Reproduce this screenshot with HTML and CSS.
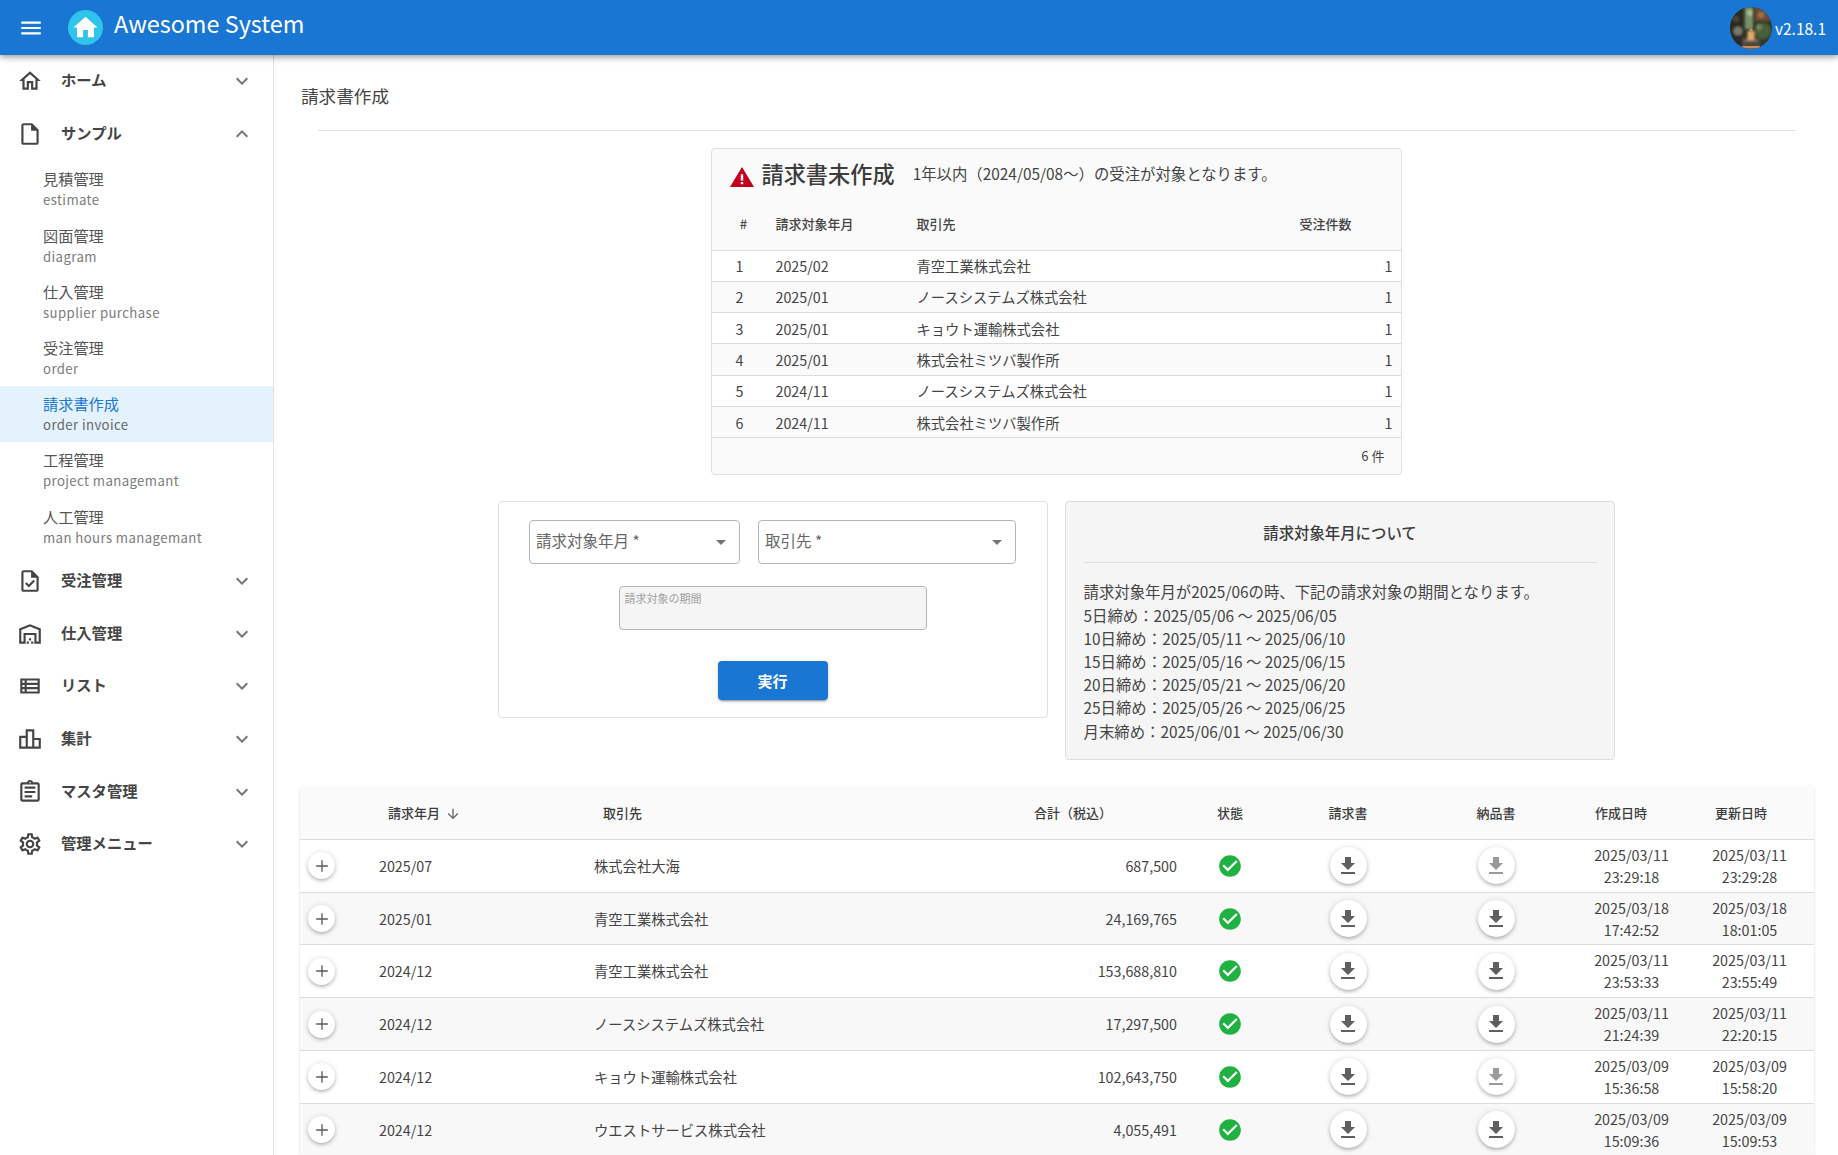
FILE: index.html
```html
<!DOCTYPE html>
<html lang="ja">
<head>
<meta charset="utf-8">
<title>Awesome System</title>
<link rel="stylesheet" href="styles.css">
</head>
<body>

<!-- icon sprite -->
<svg class="sprite" xmlns="http://www.w3.org/2000/svg">
  <symbol id="i-home" viewBox="0 0 24 24"><path d="M12 5.69l5 4.5V18h-2v-6H9v6H7v-7.81l5-4.5M12 3L2 12h3v8h6v-6h2v6h6v-8h3L12 3z"/></symbol>
  <symbol id="i-file" viewBox="0 0 24 24"><path d="M14 2H6c-1.1 0-1.99.9-1.99 2L4 20c0 1.1.89 2 1.99 2H18c1.1 0 2-.9 2-2V8l-6-6zM6 20V4h7v5h5v11H6z"/></symbol>
  <symbol id="i-task" viewBox="0 0 24 24"><path d="M14 2H6c-1.1 0-2 .9-2 2v16c0 1.1.89 2 1.99 2H18c1.1 0 2-.9 2-2V8l-6-6zm4 18H6V4h7v5h5v11zm-9.18-6.95L7.4 14.46 10.94 18l5.66-5.66-1.41-1.41-4.24 4.24-1.42-1.42z"/></symbol>
  <symbol id="i-warehouse" viewBox="0 0 24 24"><path d="M20 8.35V19h-2v-8H6v8H4V8.35l8-3.2 8 3.2zM22 21V7L12 3 2 7v14h6v-8h8v8h6zm-11-2H9v2h2v-2zm2-3h-2v2h2v-2zm2 3h-2v2h2v-2z"/></symbol>
  <symbol id="i-list" viewBox="0 0 24 24"><path d="M3 5v14h18V5H3zm4 2v2H5V7h2zm-2 6v-2h2v2H5zm0 2h2v2H5v-2zm14 2H9v-2h10v2zm0-4H9v-2h10v2zm0-4H9V7h10v2z"/></symbol>
  <symbol id="i-chart" viewBox="0 0 24 24"><path d="M16 11V3H8v6H2v12h20V11h-6zm-6-6h4v14h-4V5zm-6 6h4v8H4v-8zm16 8h-4v-6h4v6z"/></symbol>
  <symbol id="i-assign" viewBox="0 0 24 24"><path d="M7 15h7v2H7zm0-4h10v2H7zm0-4h10v2H7zm12-4h-4.18C14.4 1.84 13.3 1 12 1c-1.3 0-2.4.84-2.82 2H5c-.14 0-.27.01-.4.04-.39.08-.74.28-1.01.55-.18.18-.33.4-.43.64-.1.23-.16.49-.16.77v14c0 .27.06.54.16.78s.25.45.43.64c.27.27.62.47 1.01.55.13.02.26.03.4.03h14c1.1 0 2-.9 2-2V5c0-1.1-.9-2-2-2zm-7-.25c.41 0 .75.34.75.75s-.34.75-.75.75-.75-.34-.75-.75.34-.75.75-.75zM19 19H5V5h14v14z"/></symbol>
  <symbol id="i-gear" viewBox="0 0 24 24"><path d="M19.43 12.98c.04-.32.07-.64.07-.98 0-.34-.03-.66-.07-.98l2.11-1.65c.19-.15.24-.42.12-.64l-2-3.46c-.09-.16-.26-.25-.44-.25-.06 0-.12.01-.17.03l-2.49 1c-.52-.4-1.08-.73-1.69-.98l-.38-2.65C14.46 2.18 14.25 2 14 2h-4c-.25 0-.46.18-.49.42l-.38 2.65c-.61.25-1.17.59-1.69.98l-2.49-1c-.06-.02-.12-.03-.18-.03-.17 0-.34.09-.43.25l-2 3.46c-.13.22-.07.49.12.64l2.11 1.65c-.04.32-.07.65-.07.98 0 .33.03.66.07.98l-2.11 1.65c-.19.15-.24.42-.12.64l2 3.46c.09.16.26.25.44.25.06 0 .12-.01.17-.03l2.49-1c.52.4 1.08.73 1.69.98l.38 2.65c.03.24.24.42.49.42h4c.25 0 .46-.18.49-.42l.38-2.65c.61-.25 1.17-.59 1.69-.98l2.49 1c.06.02.12.03.18.03.17 0 .34-.09.43-.25l2-3.46c.12-.22.07-.49-.12-.64l-2.11-1.65zm-1.98-1.71c.04.31.05.52.05.73 0 .21-.02.43-.05.73l-.14 1.13.89.7 1.08.84-.7 1.21-1.27-.51-1.04-.42-.9.68c-.43.32-.84.56-1.25.73l-1.06.43-.16 1.13-.2 1.35h-1.4l-.19-1.35-.16-1.13-1.06-.43c-.43-.18-.83-.41-1.23-.71l-.91-.7-1.06.43-1.27.51-.7-1.21 1.08-.84.89-.7-.14-1.13c-.03-.31-.05-.54-.05-.74s.02-.43.05-.73l.14-1.13-.89-.7-1.08-.84.7-1.21 1.27.51 1.04.42.9-.68c.43-.32.84-.56 1.25-.73l1.06-.43.16-1.13.2-1.35h1.39l.19 1.35.16 1.13 1.06.43c.43.18.83.41 1.23.71l.91.7 1.06-.43 1.27-.51.7 1.21-1.07.85-.89.7.14 1.13zM12 8c-2.21 0-4 1.79-4 4s1.79 4 4 4 4-1.79 4-4-1.79-4-4-4zm0 6c-1.1 0-2-.9-2-2s.9-2 2-2 2 .9 2 2-.9 2-2 2z"/></symbol>
  <symbol id="i-more" viewBox="0 0 24 24"><path d="M16.59 8.59L12 13.17 7.41 8.59 6 10l6 6 6-6z"/></symbol>
  <symbol id="i-less" viewBox="0 0 24 24"><path d="M12 8l-6 6 1.41 1.41L12 10.83l4.59 4.58L18 14z"/></symbol>
  <symbol id="i-download" viewBox="0 0 24 24"><path d="M5 20h14v-2H5v2zM19 9h-4V3H9v6H5l7 7 7-7z"/></symbol>
  <symbol id="i-check" viewBox="0 0 24 24"><path d="M12 2C6.48 2 2 6.48 2 12s4.48 10 10 10 10-4.48 10-10S17.52 2 12 2zm-2 15l-5-5 1.41-1.41L10 14.17l7.59-7.59L19 8l-9 9z"/></symbol>
  <symbol id="i-plus" viewBox="0 0 24 24"><path d="M19 12.8h-6.2V19h-1.6v-6.2H5v-1.6h6.200V5h1.600v6.200H19z"/></symbol>
</svg>

<header class="appbar">
  <svg class="menu-btn" viewBox="0 0 24 24"><path d="M3 18h18v-2H3v2zm0-5h18v-2H3v2zm0-7v2h18V6H3z"/></svg>
  <span class="logo">
    <svg viewBox="0 0 24 24"><path d="M10 20v-6h4v6h5v-8h3L12 3 2 12h3v8z"/></svg>
  </span>
  <span class="app-title">Awesome System</span>
  <span class="spacer"></span>
  <svg class="avatar" viewBox="0 0 42 42">
    <defs>
      <clipPath id="avatar-clip"><circle cx="21" cy="21" r="21"/></clipPath>
      <filter id="avatar-blur"><feGaussianBlur stdDeviation="1.100"/></filter>
    </defs>
    <g clip-path="url(#avatar-clip)">
      <rect width="42" height="42" fill="#35372a"/>
      <g filter="url(#avatar-blur)">
        <rect x="0" y="0" width="13" height="42" fill="#2b2a24"/>
        <rect x="15" y="0" width="8" height="22" fill="#76906a"/>
        <rect x="25" y="0" width="17" height="14" fill="#6d4e36"/>
        <circle cx="31" cy="8" r="3" fill="#a0764e"/>
        <circle cx="20" cy="6" r="3" fill="#a9bb8e"/>
        <circle cx="33" cy="24" r="8" fill="#46603a"/>
        <circle cx="29" cy="20" r="3" fill="#6d8a54"/>
        <circle cx="8" cy="24" r="4.500" fill="#74796a"/>
        <circle cx="6" cy="12" r="3" fill="#4f4636"/>
        <rect x="12" y="31" width="18" height="11" fill="#4e463c"/>
        <rect x="17.500" y="24" width="7" height="9" fill="#e0aa6e"/>
        <rect x="14" y="33" width="14" height="1.500" fill="#8b7a68"/>
      </g>
      <circle cx="21" cy="23" r="1.800" fill="#c48f62"/>
      <rect x="12" y="39" width="18" height="2.500" fill="#c98c5c"/>
    </g>
  </svg>
  <span class="version">v2.18.1</span>
</header>

<div class="shell">
  <nav class="sidebar">
    <a class="nav-item"><svg class="nav-icon"><use href="#i-home"/></svg><span class="nav-label">ホーム</span><svg class="nav-arrow"><use href="#i-more"/></svg></a>
    <a class="nav-item"><svg class="nav-icon"><use href="#i-file"/></svg><span class="nav-label">サンプル</span><svg class="nav-arrow"><use href="#i-less"/></svg></a>
    <div class="sub-list">
      <a class="sub-item"><span class="sub-main">見積管理</span><span class="sub-en">estimate</span></a>
      <a class="sub-item"><span class="sub-main">図面管理</span><span class="sub-en">diagram</span></a>
      <a class="sub-item"><span class="sub-main">仕入管理</span><span class="sub-en">supplier purchase</span></a>
      <a class="sub-item"><span class="sub-main">受注管理</span><span class="sub-en">order</span></a>
      <a class="sub-item active"><span class="sub-main">請求書作成</span><span class="sub-en">order invoice</span></a>
      <a class="sub-item"><span class="sub-main">工程管理</span><span class="sub-en">project managemant</span></a>
      <a class="sub-item"><span class="sub-main">人工管理</span><span class="sub-en">man hours managemant</span></a>
    </div>
    <a class="nav-item"><svg class="nav-icon"><use href="#i-task"/></svg><span class="nav-label">受注管理</span><svg class="nav-arrow"><use href="#i-more"/></svg></a>
    <a class="nav-item"><svg class="nav-icon"><use href="#i-warehouse"/></svg><span class="nav-label">仕入管理</span><svg class="nav-arrow"><use href="#i-more"/></svg></a>
    <a class="nav-item"><svg class="nav-icon"><use href="#i-list"/></svg><span class="nav-label">リスト</span><svg class="nav-arrow"><use href="#i-more"/></svg></a>
    <a class="nav-item"><svg class="nav-icon"><use href="#i-chart"/></svg><span class="nav-label">集計</span><svg class="nav-arrow"><use href="#i-more"/></svg></a>
    <a class="nav-item"><svg class="nav-icon"><use href="#i-assign"/></svg><span class="nav-label">マスタ管理</span><svg class="nav-arrow"><use href="#i-more"/></svg></a>
    <a class="nav-item"><svg class="nav-icon"><use href="#i-gear"/></svg><span class="nav-label">管理メニュー</span><svg class="nav-arrow"><use href="#i-more"/></svg></a>
  </nav>

  <main class="content">
    <h1 class="page-title">請求書作成</h1>
    <hr class="page-rule">

    <section class="alert-card">
      <div class="alert-head">
        <svg class="alert-icon" viewBox="0 0 24 22" preserveAspectRatio="none"><path d="M12 0L0 22h24z" fill="#c4001d"/><rect x="10.800" y="8" width="2.400" height="7" fill="#fff"/><rect x="10.800" y="16.500" width="2.400" height="2.400" fill="#fff"/></svg>
        <span class="alert-title">請求書未作成</span>
        <span class="alert-note">1年以内（2024/05/08～）の受注が対象となります。</span>
      </div>
      <table class="alert-table">
        <thead>
          <tr><th class="c-no">#</th><th class="c-month">請求対象年月</th><th class="c-vendor">取引先</th><th class="c-count">受注件数</th></tr>
        </thead>
        <tbody>
          <tr><td class="c-no">1</td><td class="c-month">2025/02</td><td class="c-vendor">青空工業株式会社</td><td class="c-count">1</td></tr>
          <tr><td class="c-no">2</td><td class="c-month">2025/01</td><td class="c-vendor">ノースシステムズ株式会社</td><td class="c-count">1</td></tr>
          <tr><td class="c-no">3</td><td class="c-month">2025/01</td><td class="c-vendor">キョウト運輸株式会社</td><td class="c-count">1</td></tr>
          <tr><td class="c-no">4</td><td class="c-month">2025/01</td><td class="c-vendor">株式会社ミツバ製作所</td><td class="c-count">1</td></tr>
          <tr><td class="c-no">5</td><td class="c-month">2024/11</td><td class="c-vendor">ノースシステムズ株式会社</td><td class="c-count">1</td></tr>
          <tr><td class="c-no">6</td><td class="c-month">2024/11</td><td class="c-vendor">株式会社ミツバ製作所</td><td class="c-count">1</td></tr>
        </tbody>
      </table>
      <div class="alert-foot">6 件</div>
    </section>

    <div class="form-row">
      <section class="form-card">
        <div class="select-row">
          <div class="select select-month"><span>請求対象年月 *</span><i class="caret"></i></div>
          <div class="select select-vendor"><span>取引先 *</span><i class="caret"></i></div>
        </div>
        <div class="period-field">請求対象の期間</div>
        <button class="run-btn">実行</button>
      </section>

      <section class="info-card">
        <h2 class="info-title">請求対象年月について</h2>
        <hr class="info-rule">
        <p class="info-text">請求対象年月が2025/06の時、下記の請求対象の期間となります。<br>
        5日締め：2025/05/06 ～ 2025/06/05<br>
        10日締め：2025/05/11 ～ 2025/06/10<br>
        15日締め：2025/05/16 ～ 2025/06/15<br>
        20日締め：2025/05/21 ～ 2025/06/20<br>
        25日締め：2025/05/26 ～ 2025/06/25<br>
        月末締め：2025/06/01 ～ 2025/06/30</p>
      </section>
    </div>

    <section class="data-card">
      <table class="data-table">
        <thead>
          <tr>
            <th class="d-expand"></th>
            <th class="d-date">請求年月<svg class="sort-icon" viewBox="0 0 24 24"><path d="M20 12l-1.410-1.410L13 16.170V4h-2v12.170l-5.580-5.590L4 12l8 8 8-8z"/></svg></th>
            <th class="d-vendor">取引先</th>
            <th class="d-amount">合計（税込）</th>
            <th class="d-status">状態</th>
            <th class="d-invoice">請求書</th>
            <th class="d-delivery">納品書</th>
            <th class="d-created">作成日時</th>
            <th class="d-updated">更新日時</th>
          </tr>
        </thead>
        <tbody>
          <tr>
            <td class="d-expand"><button class="plus-btn"><svg><use href="#i-plus"/></svg></button></td>
            <td class="d-date">2025/07</td><td class="d-vendor">株式会社大海</td><td class="d-amount">687,500</td>
            <td class="d-status"><svg class="ok-icon"><use href="#i-check"/></svg></td>
            <td class="d-invoice"><button class="dl-btn"><svg><use href="#i-download"/></svg></button></td>
            <td class="d-delivery"><button class="dl-btn off"><svg><use href="#i-download"/></svg></button></td>
            <td class="d-created">2025/03/11<br>23:29:18</td><td class="d-updated">2025/03/11<br>23:29:28</td>
          </tr>
          <tr>
            <td class="d-expand"><button class="plus-btn"><svg><use href="#i-plus"/></svg></button></td>
            <td class="d-date">2025/01</td><td class="d-vendor">青空工業株式会社</td><td class="d-amount">24,169,765</td>
            <td class="d-status"><svg class="ok-icon"><use href="#i-check"/></svg></td>
            <td class="d-invoice"><button class="dl-btn"><svg><use href="#i-download"/></svg></button></td>
            <td class="d-delivery"><button class="dl-btn"><svg><use href="#i-download"/></svg></button></td>
            <td class="d-created">2025/03/18<br>17:42:52</td><td class="d-updated">2025/03/18<br>18:01:05</td>
          </tr>
          <tr>
            <td class="d-expand"><button class="plus-btn"><svg><use href="#i-plus"/></svg></button></td>
            <td class="d-date">2024/12</td><td class="d-vendor">青空工業株式会社</td><td class="d-amount">153,688,810</td>
            <td class="d-status"><svg class="ok-icon"><use href="#i-check"/></svg></td>
            <td class="d-invoice"><button class="dl-btn"><svg><use href="#i-download"/></svg></button></td>
            <td class="d-delivery"><button class="dl-btn"><svg><use href="#i-download"/></svg></button></td>
            <td class="d-created">2025/03/11<br>23:53:33</td><td class="d-updated">2025/03/11<br>23:55:49</td>
          </tr>
          <tr>
            <td class="d-expand"><button class="plus-btn"><svg><use href="#i-plus"/></svg></button></td>
            <td class="d-date">2024/12</td><td class="d-vendor">ノースシステムズ株式会社</td><td class="d-amount">17,297,500</td>
            <td class="d-status"><svg class="ok-icon"><use href="#i-check"/></svg></td>
            <td class="d-invoice"><button class="dl-btn"><svg><use href="#i-download"/></svg></button></td>
            <td class="d-delivery"><button class="dl-btn"><svg><use href="#i-download"/></svg></button></td>
            <td class="d-created">2025/03/11<br>21:24:39</td><td class="d-updated">2025/03/11<br>22:20:15</td>
          </tr>
          <tr>
            <td class="d-expand"><button class="plus-btn"><svg><use href="#i-plus"/></svg></button></td>
            <td class="d-date">2024/12</td><td class="d-vendor">キョウト運輸株式会社</td><td class="d-amount">102,643,750</td>
            <td class="d-status"><svg class="ok-icon"><use href="#i-check"/></svg></td>
            <td class="d-invoice"><button class="dl-btn"><svg><use href="#i-download"/></svg></button></td>
            <td class="d-delivery"><button class="dl-btn off"><svg><use href="#i-download"/></svg></button></td>
            <td class="d-created">2025/03/09<br>15:36:58</td><td class="d-updated">2025/03/09<br>15:58:20</td>
          </tr>
          <tr>
            <td class="d-expand"><button class="plus-btn"><svg><use href="#i-plus"/></svg></button></td>
            <td class="d-date">2024/12</td><td class="d-vendor">ウエストサービス株式会社</td><td class="d-amount">4,055,491</td>
            <td class="d-status"><svg class="ok-icon"><use href="#i-check"/></svg></td>
            <td class="d-invoice"><button class="dl-btn"><svg><use href="#i-download"/></svg></button></td>
            <td class="d-delivery"><button class="dl-btn"><svg><use href="#i-download"/></svg></button></td>
            <td class="d-created">2025/03/09<br>15:09:36</td><td class="d-updated">2025/03/09<br>15:09:53</td>
          </tr>
        </tbody>
      </table>
    </section>
  </main>
</div>

</body>
</html>
```

FILE: styles.css
```css
* {
    box-sizing: border-box;
}

html, body {
    height: 100%;
}

body {
    margin: 0;
    overflow: hidden;
    font-family: "Noto Sans CJK JP", "Noto Sans", sans-serif;
    font-size: 14.300px;
    color: #3c3c3c;
    background: #fff;
}

.sprite {
    display: none;
}

/* App bar */
.appbar {
    position: relative;
    z-index: 2;
    display: flex;
    align-items: center;
    height: 55px;
    padding: 0 12px 0 18px;
    background-color: #1976d2;
    color: #fff;
    box-shadow: 0 2px 4px -1px rgba(0,0,0,.2), 0 4px 5px 0 rgba(0,0,0,.14), 0 1px 10px 0 rgba(0,0,0,.12);
}
.menu-btn {
    width: 26px;
    height: 26px;
    fill: #fff;
    flex: none;
}
.logo {
    display: flex;
    align-items: center;
    justify-content: center;
    width: 35px;
    height: 35px;
    margin-left: 24px;
    border-radius: 50%;
    background-color: #2fc4ec;
}
.logo svg {
    width: 29px;
    height: 29px;
    fill: #fff;
}
.app-title {
    margin-left: 11px;
    margin-top: -10px;
    font-size: 23.400px;
}
.spacer {
    flex: 1;
}
.avatar {
    width: 42px;
    height: 42px;
}
.version {
    margin-left: 3px;
    font-size: 15.500px;
}

.shell {
    display: flex;
    height: 1100px;
}

/* Side navigation */
.sidebar {
    flex: none;
    width: 274px;
    border-right: 1px solid #e0e0e0;
}
.nav-item {
    display: flex;
    align-items: center;
    height: 52.7px;
    padding-left: 17px;
    padding-right: 19px;
}
.nav-icon {
    width: 26px;
    height: 26px;
    fill: #454545;
    flex: none;
}
.nav-label {
    flex: 1;
    margin-left: 18px;
    margin-bottom: 4px;
    font-size: 15.300px;
    font-weight: 700;
    color: #454545;
}
.nav-arrow {
    width: 24px;
    height: 24px;
    fill: #757575;
}
.sub-list {
    padding-top: 1px;
}
.sub-item {
    display: flex;
    flex-direction: column;
    justify-content: center;
    height: 56.2px;
    padding-left: 43px;
}
.sub-main {
    font-size: 15.200px;
    line-height: 21px;
    color: #555;
}
.sub-en {
    margin-top: 1px;
    font-size: 13.200px;
    line-height: 20px;
    letter-spacing: .4px;
    color: #7b7b7b;
}
.sub-item.active {
    background-color: #e3f2fd;
}
.sub-item.active .sub-main {
    color: #1976d2;
}
.sub-item.active .sub-en {
    color: #666;
}

/* Main column */
.content {
    flex: 1;
    min-width: 0;
    padding-top: 27px;
}
.page-title {
    margin: 0 0 0 27px;
    font-size: 17.600px;
    font-weight: 400;
    line-height: 28px;
    color: #444;
}
.page-rule {
    margin: 20px 42px 0 44px;
    border: 0;
    border-top: 1px solid #e0e0e0;
}

/* Missing invoices card */
.alert-card {
    width: 691px;
    margin: 17px auto 0;
    background-color: #fafafa;
    border: 1px solid #e0e0e0;
    border-radius: 4px;
}
.alert-head {
    display: flex;
    align-items: center;
    height: 50px;
    padding-left: 18px;
}
.alert-icon {
    width: 24px;
    height: 20px;
    margin-top: 6px;
}
.alert-title {
    margin-left: 8px;
    margin-bottom: 2px;
    font-size: 22.200px;
    font-weight: 500;
    color: #3c3c3c;
}
.alert-note {
    margin-left: 18px;
    margin-bottom: 3px;
    font-size: 15.400px;
    color: #444;
}
.alert-table {
    width: 100%;
    border-collapse: collapse;
    table-layout: fixed;
}
.alert-table th {
    height: 51px;
    font-size: 13px;
    font-weight: 500;
    text-align: left;
    padding: 0 0 2px 8px;
    border-bottom: 1px solid #dcdcdc;
    color: #444;
}
.alert-table td {
    height: 31.330px;
    padding: 0 0 0 8px;
    border-bottom: 1px solid #dcdcdc;
    color: #444;
}
.alert-table tbody tr:nth-child(odd) {
    background-color: #fff;
}
.alert-table .c-no {
    width: 56px;
    padding-left: 0;
    text-align: center;
}
.alert-table th.c-no {
    padding-left: 8px;
}
.alert-table .c-month {
    width: 141px;
}
.alert-table .c-vendor {
    width: 374px;
}
.alert-table td.c-count {
    text-align: right;
    padding-right: 8px;
}
.alert-table th.c-count {
    padding-left: 17px;
}
.alert-foot {
    height: 36px;
    padding-right: 16px;
    font-size: 13px;
    line-height: 35px;
    text-align: right;
    color: #444;
}

/* Form + explanation */
.form-row {
    display: flex;
    justify-content: center;
    align-items: flex-start;
    gap: 17px;
    margin-top: 26px;
}
.form-card {
    display: flex;
    flex-direction: column;
    align-items: center;
    width: 550px;
    height: 217px;
    padding-top: 18px;
    background-color: #fff;
    border: 1px solid #e0e0e0;
    border-radius: 4px;
}
.select-row {
    display: flex;
    gap: 18px;
}
.select {
    display: flex;
    align-items: center;
    justify-content: space-between;
    height: 44px;
    padding: 0 13px 0 6px;
    font-size: 15.500px;
    color: #666;
    border: 1px solid #b5b5b5;
    border-radius: 4px;
}
.select span {
    margin-bottom: 4px;
}
.select-month {
    width: 211px;
}
.select-vendor {
    width: 258px;
}
.caret {
    width: 0;
    height: 0;
    border-left: 5.500px solid transparent;
    border-right: 5.500px solid transparent;
    border-top: 5.500px solid #757575;
}
.period-field {
    width: 308px;
    height: 44px;
    margin-top: 22px;
    padding: 3px 5px;
    font-size: 11px;
    line-height: 16px;
    color: #9e9e9e;
    background-color: #f5f5f5;
    border: 1px solid #b5b5b5;
    border-radius: 4px;
}
.run-btn {
    width: 110px;
    height: 39px;
    margin-top: 31px;
    font-family: inherit;
    font-size: 15px;
    font-weight: 700;
    color: #fff;
    background-color: #1976d2;
    border: 0;
    border-radius: 4px;
    box-shadow: 0 3px 1px -2px rgba(0,0,0,.2), 0 2px 2px 0 rgba(0,0,0,.14), 0 1px 5px 0 rgba(0,0,0,.12);
}
.info-card {
    width: 550px;
    height: 259px;
    padding: 18px 17px 0 18px;
    background-color: #f5f5f5;
    border: 1px solid #dcdcdc;
    border-radius: 4px;
}
.info-title {
    margin: 0;
    font-size: 15.400px;
    font-weight: 500;
    line-height: 24px;
    text-align: center;
    color: #3c3c3c;
}
.info-rule {
    margin: 18px 0 0;
    border: 0;
    border-top: 1px solid #dcdcdc;
}
.info-text {
    margin: 17px 0 0;
    font-size: 15.400px;
    line-height: 23.200px;
    color: #444;
}

/* Invoice list */
.data-card {
    width: 1514px;
    margin: 26px 0 0 26px;
    border-radius: 4px;
    box-shadow: 0 2px 1px -1px rgba(0,0,0,.2), 0 1px 1px 0 rgba(0,0,0,.14), 0 1px 3px 0 rgba(0,0,0,.12);
}
.data-table {
    width: 100%;
    border-collapse: collapse;
    table-layout: fixed;
}
.data-table th {
    height: 53px;
    padding: 0;
    font-size: 13px;
    font-weight: 500;
    text-align: left;
    color: #3c3c3c;
    background-color: #fafafa;
    border-bottom: 1px solid #dcdcdc;
}
.data-table td {
    height: 52.750px;
    padding: 0;
    line-height: 22px;
    color: #444;
    border-bottom: 1px solid #dcdcdc;
}
.data-table tbody tr:nth-child(even) {
    background-color: #f8f8f8;
}
.d-expand {
    width: 63px;
    padding-left: 8px !important;
}
.d-date {
    width: 215px;
    padding-left: 16px !important;
}
th.d-date, th.d-vendor {
    padding-left: 25px !important;
}
.d-vendor {
    width: 422px;
    padding-left: 16px !important;
}
.d-amount {
    width: 194px;
    padding-right: 17px !important;
    text-align: right;
}
th.d-amount {
    padding-left: 34px !important;
    padding-right: 0 !important;
    text-align: left !important;
}
.d-status {
    width: 72px;
    text-align: center !important;
}
.d-invoice {
    width: 164px;
    text-align: center !important;
}
.d-delivery {
    width: 132px;
    text-align: center !important;
}
.d-created {
    width: 118px;
    text-align: center !important;
}
td.d-created {
    padding-left: 21px !important;
}
.d-updated {
    width: 134px;
    padding-right: 12px !important;
    text-align: center !important;
}
td.d-updated {
    padding-left: 17px !important;
    padding-right: 12px !important;
}
.sort-icon {
    width: 16px;
    height: 16px;
    margin-left: 5px;
    vertical-align: -4px;
    fill: #666;
}
.plus-btn, .dl-btn {
    display: inline-flex;
    align-items: center;
    justify-content: center;
    padding: 0;
    vertical-align: middle;
    background-color: #fff;
    border: 0;
    border-radius: 50%;
    box-shadow: 0 2px 4px -1px rgba(0,0,0,.35), 0 0 6px rgba(0,0,0,.1);
}
.plus-btn {
    width: 27px;
    height: 27px;
}
.plus-btn svg {
    width: 20px;
    height: 20px;
    fill: #5a5a5a;
}
.dl-btn {
    width: 37px;
    height: 37px;
}
.dl-btn svg {
    width: 24px;
    height: 24px;
    fill: #5f5f5f;
}
.dl-btn.off svg {
    fill: #9a9a9a;
}
.ok-icon {
    width: 26px;
    height: 26px;
    vertical-align: middle;
    fill: #1fb141;
}
```
